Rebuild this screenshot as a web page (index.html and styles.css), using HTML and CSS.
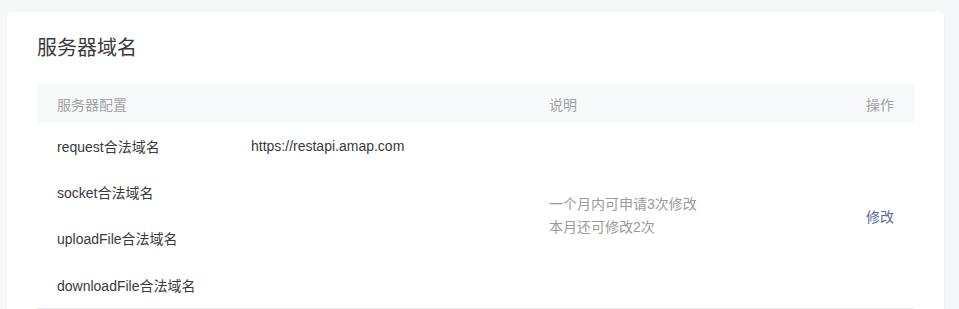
FILE: index.html
```html
<!DOCTYPE html>
<html lang="zh-CN">
<head>
    <meta charset="UTF-8">
    <title>服务器域名</title>
    <link rel="stylesheet" href="styles.css">
</head>
<body>
    <div class="card">
        <h2 class="card-title">服务器域名</h2>
        <table class="domain-table">
            <thead>
                <tr>
                    <th class="col-name">服务器配置</th>
                    <th class="col-value"></th>
                    <th class="col-desc">说明</th>
                    <th class="col-op">操作</th>
                </tr>
            </thead>
            <tbody>
                <tr>
                    <td>request合法域名</td>
                    <td>https://restapi.amap.com</td>
                    <td class="desc" rowspan="4">一个月内可申请3次修改<br>本月还可修改2次</td>
                    <td class="op" rowspan="4"><a href="#">修改</a></td>
                </tr>
                <tr>
                    <td>socket合法域名</td>
                    <td></td>
                </tr>
                <tr>
                    <td>uploadFile合法域名</td>
                    <td></td>
                </tr>
                <tr class="last">
                    <td>downloadFile合法域名</td>
                    <td></td>
                </tr>
            </tbody>
        </table>
    </div>
</body>
</html>
```

FILE: styles.css
```css
body { margin: 0; padding: 12px 15px 0 7px; background: #f6f7f9; font-family: "Liberation Sans", "Noto Sans CJK SC", sans-serif; color: #353535; }
.card { background: #fff; border-radius: 5px 5px 0 0; padding: 22px 30px 0; box-shadow: 1px 0 2px rgba(0, 0, 0, 0.04); }
.card-title { margin: 0 0 22px; font-size: 20px; font-weight: 400; line-height: 28px; color: #3a3a3a; }
.domain-table { width: 100%; border-collapse: collapse; font-size: 14px; }
.domain-table th { height: 39px; padding: 0 0 0 20px; background: #f6f8f9; color: #a3a3a3; font-weight: 400; text-align: left; }
.domain-table th.col-name { width: 174px; }
.domain-table th.col-value { width: 278px; }
.domain-table th.col-op { text-align: right; padding: 0 20px 0 0; width: 100px; }
.domain-table td { height: 46px; padding: 0 0 0 20px; color: #3a3a3a; }
.domain-table tr.last td { height: 47px; }
.domain-table tr.last td, .domain-table td.desc, .domain-table td.op { border-bottom: 1px solid #e7e7eb; }
.domain-table td.desc { color: #9a9a9a; line-height: 23px; }
.domain-table td.op { text-align: right; padding: 0 20px 0 0; }
.domain-table td.op a { color: #576b95; text-decoration: none; }
```
